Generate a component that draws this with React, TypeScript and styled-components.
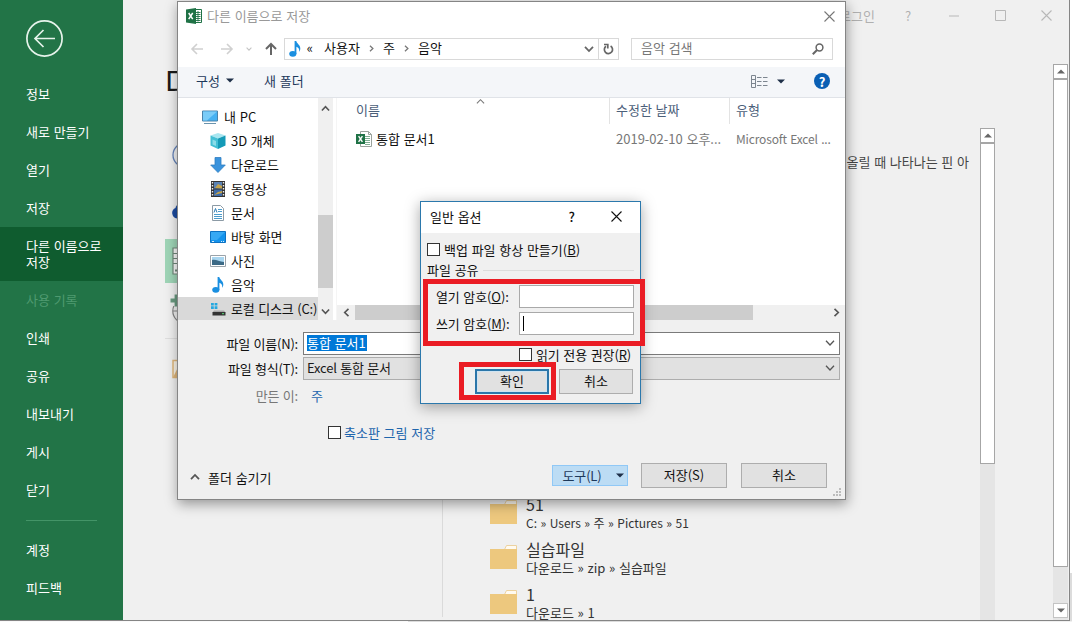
import React from 'react';
import styled, { createGlobalStyle, css } from 'styled-components';

const GlobalStyle = createGlobalStyle`
  * {
    box-sizing: border-box;
  }
  body {
    margin: 0;
    background: #f0f0f0;
    font-family: 'Noto Sans CJK KR', 'Noto Sans', sans-serif;
    font-size: 13px;
    word-spacing: 0.8px;
    color: #1a1a1a;
    overflow: hidden;
  }
  svg {
    display: block;
    flex: none;
  }
`;

const Screen = styled.div`
  position: relative;
  display: grid;
  grid-template-columns: 1070px 2px;
  grid-template-rows: 621px 1px;
  width: 1072px;
  height: 622px;
  overflow: hidden;
  white-space: nowrap;
`;

/* ---------- backstage window ---------- */

const Backstage = styled.div`
  display: flex;
  background: #f0f0f0;
  border-right: 1px solid #858585;
  border-bottom: 1px solid #858585;
  overflow: hidden;
`;

const Sidebar = styled.nav`
  width: 123px;
  flex: none;
  background: #227447;
  color: #fff;
`;

const BackButton = styled.div`
  height: 75px;
  padding: 20px 0 0 26px;
`;

const MenuItem = styled.div<{ $active?: boolean; $disabled?: boolean }>`
  display: flex;
  align-items: center;
  height: ${({ $active }) => ($active ? 54 : 38)}px;
  padding-left: 26px;
  line-height: 16px;
  white-space: pre-line;
  color: ${({ $disabled }) => ($disabled ? '#4f9a70' : '#fff')};
  ${({ $active }) => $active && css`
    background: #0f5c2f;
  `}
`;

const MenuDivider = styled.div`
  height: 1px;
  width: 71px;
  margin: 11px 0 10px 26px;
  background: #439467;
`;

const Main = styled.div`
  flex: 1;
  display: flex;
  flex-direction: column;
`;

const WindowBar = styled.div`
  display: flex;
  flex: none;
  justify-content: flex-end;
  align-items: center;
  height: 31px;
  color: #b0b0b0;
`;

const SignIn = styled.span`
  padding-right: 10px;
`;

const WindowButton = styled.span`
  display: flex;
  justify-content: center;
  width: 46px;
`;

const MainBody = styled.div`
  flex: 1;
  display: flex;
  min-height: 0;
`;

const Places = styled.div`
  width: 320px;
  height: 586px;
  padding: 33px 0 0 42px;
  border-right: 1px solid #dadada;
`;

const Heading = styled.h1`
  height: 37px;
  margin: 0 0 32px;
  font-size: 32px;
  font-weight: 400;
  line-height: 35px;
`;

const Place = styled.div<{ $gap: number; $active?: boolean }>`
  display: flex;
  align-items: center;
  height: 44px;
  padding-left: 7px;
  margin-bottom: ${({ $gap }) => $gap}px;
  background: ${({ $active }) => ($active ? '#9fd5b7' : 'transparent')};
`;

const PlaceDivider = styled.div`
  height: 1px;
  margin-bottom: 8px;
  background: #dedede;
`;

const Recent = styled.div`
  flex: 1;
  display: flex;
  flex-direction: column;
  padding-top: 121px;
`;

const PinHint = styled.div`
  flex: none;
  height: 342px;
  padding-right: 11px;
  text-align: right;
  line-height: 20px;
  color: #444;
`;

const FolderRow = styled.div`
  display: flex;
  flex: none;
  height: 45px;
  padding: 0 0 0 47px;
  gap: 9px;
`;

const FolderName = styled.div`
  font-size: 16px;
  line-height: 18px;
  padding: 1px 0 3px;
  color: #333;
`;

const FolderPath = styled.div<{ $latin?: boolean }>`
  font-size: ${({ $latin }) => ($latin ? 12 : 13)}px;
  line-height: 13px;
  color: #333;
`;

const Track = styled.div<{ $top: number; $right: number }>`
  display: flex;
  flex-direction: column;
  width: 15px;
  margin: ${({ $top, $right }) => `${$top}px ${$right}px 0 0`};
  background: #e5e5e5;
`;

const TrackButton = styled.div<{ $end?: boolean }>`
  display: flex;
  align-items: center;
  justify-content: center;
  height: 15px;
  background: #fff;
  border: 1px solid #a6a6a6;
  ${({ $end }) => $end && css`
    margin: auto 0 2px;
    border-color: #c4c4c4;
  `}
`;

const TrackThumb = styled.div<{ $size: number }>`
  height: ${({ $size }) => $size}px;
  background: #fff;
  border: 1px solid #a6a6a6;
`;

const EdgeStrip = styled.div`
  background: linear-gradient(#fff 0 573px, #dcdcdc 573px);
`;

const BottomStrip = styled.div`
  grid-column: 1 / 3;
  background: linear-gradient(90deg, #fafafa 0 408px, #dcdcdc 408px 700px, #f0f0f0 700px);
`;

/* ---------- save dialog ---------- */

const SaveDialog = styled.div`
  position: absolute;
  left: 177px;
  top: 1px;
  width: 669px;
  height: 499px;
  display: flex;
  flex-direction: column;
  background: #f0f0f0;
  border: 1px solid #858585;
  box-shadow: 1px 4px 12px rgba(0, 0, 0, 0.38);
`;

const TitleBar = styled.div`
  display: flex;
  align-items: center;
  height: 30px;
  padding: 0 10px 2px 8px;
  gap: 5px;
  background: #fff;
  color: #999;
`;

const Title = styled.span`
  flex: 1;
  padding-bottom: 2px;
`;

const NavBar = styled.div`
  display: flex;
  align-items: center;
  height: 35px;
  padding: 0 12px 2px 12px;
  background: #fff;
`;

const NavArrows = styled.div`
  display: flex;
  align-items: center;
  width: 94px;
`;

const NavGap = styled.span<{ $width: number }>`
  width: ${({ $width }) => $width}px;
`;

const AddressBar = styled.div`
  display: flex;
  align-items: center;
  width: 335px;
  height: 22px;
  border: 1px solid #d9d9d9;
  padding-left: 2px;
`;

const Crumb = styled.span<{ $width: number }>`
  width: ${({ $width }) => $width}px;
  padding-bottom: 2px;
  line-height: 18px;
  color: #111;
`;

const AddressEnd = styled.div`
  display: flex;
  align-items: center;
  margin-left: auto;
  height: 20px;
`;

const Refresh = styled.div`
  display: flex;
  align-items: center;
  justify-content: center;
  width: 20px;
  height: 20px;
  margin-left: 4px;
  border-left: 1px solid #d9d9d9;
`;

const SearchBox = styled.div`
  display: flex;
  align-items: center;
  justify-content: space-between;
  width: 202px;
  height: 22px;
  margin-left: 12px;
  padding: 0 8px 0 9px;
  border: 1px solid #d9d9d9;
  line-height: 18px;
  color: #777;
`;

const SearchText = styled.span`
  padding-bottom: 2px;
`;

const Toolbar = styled.div`
  display: flex;
  align-items: center;
  height: 31px;
  padding: 0 15px 2px 18px;
  background: #f4f6f9;
  border-bottom: 1px solid #e0e3e8;
  color: #1e395b;
`;

const ToolbarItem = styled.span<{ $width: number }>`
  display: flex;
  align-items: center;
  gap: 6px;
  width: ${({ $width }) => $width}px;
  padding-bottom: 1px;
`;

const ToolbarEnd = styled.div`
  display: flex;
  align-items: center;
  margin-left: auto;
  gap: 9px;
`;

const HelpBadge = styled.span`
  display: flex;
  align-items: center;
  justify-content: center;
  width: 16px;
  height: 16px;
  margin-left: 20px;
  border-radius: 50%;
  background: #0a5fb4;
  color: #fff;
  font-size: 13px;
  font-weight: 700;
`;

const Browser = styled.div`
  display: flex;
  height: 222px;
  background: #fff;
`;

const Tree = styled.div`
  width: 140px;
  padding-top: 7px;
  overflow: hidden;
`;

const TreeItem = styled.div<{ $root?: boolean; $selected?: boolean }>`
  display: flex;
  align-items: center;
  gap: ${({ $root }) => ($root ? 6 : 5)}px;
  height: 24px;
  padding-left: ${({ $root }) => ($root ? 24 : 32)}px;
  background: ${({ $selected }) => ($selected ? '#d9d9d9' : 'transparent')};
  letter-spacing: ${({ $selected }) => ($selected ? '-0.15px' : 'normal')};
  color: #111;
`;

const TreeLabel = styled.span`
  padding-bottom: 2px;
`;

const TreeScroll = styled.div`
  display: flex;
  flex-direction: column;
  align-items: center;
  justify-content: space-between;
  width: 15px;
  padding: 6px 0 4px;
  background: #f0f0f0;
`;

const TreeThumb = styled.div`
  width: 15px;
  height: 73px;
  margin-top: 83px;
  background: #cdcdcd;
`;

const FileArea = styled.div`
  flex: 1;
  display: flex;
  flex-direction: column;
  margin-left: 3px;
  border-left: 1px solid #f5f5f5;
`;

const Columns = styled.div<{ $header?: boolean }>`
  display: grid;
  grid-template-columns: 272px 120px 1fr;
  height: ${({ $header }) => ($header ? 26 : 30)}px;
  line-height: ${({ $header }) => ($header ? 22 : 29)}px;
  color: ${({ $header }) => ($header ? '#4c607a' : '#777')};
`;

const Cell = styled.div<{ $line?: boolean; $first?: boolean; $latin?: boolean }>`
  display: flex;
  align-items: center;
  gap: 4px;
  padding-left: ${({ $first }) => ($first ? 18 : 6)}px;
  padding-bottom: 2px;
  border-left: 1px solid ${({ $line }) => ($line ? '#e3e3e3' : 'transparent')};
  ${({ $latin }) => $latin && css`
    font-size: 12px;
    letter-spacing: -0.15px;
  `}
`;

const SortMark = styled.span`
  align-self: flex-start;
  margin-left: 92px;
  margin-top: -1px;
`;

const FileName = styled.span`
  color: #111;
`;

const ListScroll = styled.div`
  display: flex;
  align-items: center;
  justify-content: space-between;
  height: 15px;
  margin-top: auto;
  padding: 0 4px 0 5px;
  background: #f0f0f0;
`;

const ListThumb = styled.div`
  width: 398px;
  height: 15px;
  margin: 0 auto 0 4px;
  background: #cdcdcd;
`;

const Form = styled.div`
  display: flex;
  flex-direction: column;
  gap: 3px;
  padding: 12px 5px 0 0;
`;

const Field = styled.div<{ $drop?: boolean }>`
  display: flex;
  align-items: center;
  height: 22px;
  margin-top: ${({ $drop }) => ($drop ? 2 : 0)}px;
`;

const FieldLabel = styled.span<{ $muted?: boolean }>`
  width: 120px;
  margin-right: 5px;
  text-align: right;
  letter-spacing: -0.2px;
  color: ${({ $muted }) => ($muted ? '#777' : '#111')};
`;

const Combo = styled.div<{ $grey?: boolean }>`
  display: flex;
  align-items: center;
  justify-content: space-between;
  flex: 1;
  height: 23px;
  padding: 0 4px 0 3px;
  line-height: 16px;
  letter-spacing: -0.2px;
  background: ${({ $grey }) => ($grey ? '#e1e1e1' : '#fff')};
  border: 1px solid ${({ $grey }) => ($grey ? '#adadad' : '#7a7a7a')};
`;

const Selection = styled.span`
  padding-right: 1px;
  letter-spacing: 0;
  background: #0078d7;
  color: #fff;
`;

const Author = styled.span`
  margin-left: 8px;
  color: #1f66ad;
`;

const CheckRow = styled.div<{ $link?: boolean }>`
  display: flex;
  align-items: center;
  gap: 4px;
  color: ${({ $link }) => ($link ? '#1f66ad' : '#111')};
`;

const ThumbnailRow = styled(CheckRow)`
  margin: 16px 0 0 150px;
  height: 20px;
  gap: 3px;
`;

const CheckBox = styled.span`
  width: 13px;
  height: 13px;
  background: #fff;
  border: 1px solid #333;
`;

const Footer = styled.div`
  display: flex;
  align-items: center;
  justify-content: flex-end;
  height: 26px;
  margin: 20px 18px 0 12px;
`;

const HideFolders = styled.div`
  display: flex;
  align-items: center;
  gap: 8px;
  margin-right: auto;
  padding-top: 4px;
  color: #111;
`;

const Button = styled.div<{ $width: number }>`
  display: flex;
  align-items: center;
  justify-content: center;
  width: ${({ $width }) => $width}px;
  height: 25px;
  padding-bottom: 2px;
  background: #e1e1e1;
  border: 1px solid #adadad;
  color: #111;
`;

const SaveButton = styled(Button)`
  margin: 0 14px 0 13px;
`;

const ToolsButton = styled(Button)`
  height: 21px;
  gap: 15px;
  padding-left: 7px;
  padding-bottom: 0;
  letter-spacing: -0.2px;
  background: #bcdcf4;
  border-color: #90c8f6;
  color: #1e395b;
`;

const Grip = styled.div`
  align-self: flex-end;
  margin: 0 3px 0 0;
`;

/* ---------- general options dialog ---------- */

const OptionsDialog = styled.div`
  position: absolute;
  left: 420px;
  top: 201px;
  width: 221px;
  height: 203px;
  background: #f0f0f0;
  border: 1px solid #2b78ac;
  box-shadow: 0 3px 14px rgba(0, 0, 0, 0.35);
`;

const OptionsTitle = styled.div`
  display: flex;
  align-items: center;
  height: 31px;
  padding: 0 18px 3px 9px;
  background: #fff;
  color: #111;
`;

const OptionsHelp = styled.span`
  margin: 0 36px 0 auto;
  font-weight: 500;
`;

const OptionsBody = styled.div`
  display: flex;
  flex-direction: column;
  padding: 7px 6px 0;
`;

const GroupLabel = styled.div`
  display: flex;
  align-items: center;
  gap: 4px;
  height: 20px;
  margin: 1px 0 3px;
  line-height: 20px;
  color: #111;

  &::after {
    content: '';
    flex: 1;
    height: 1px;
    background: #dcdcdc;
  }
`;

const PasswordRow = styled.div`
  display: flex;
  align-items: center;
  justify-content: space-between;
  height: 27px;
  padding-left: 9px;
  letter-spacing: -0.1px;
  color: #111;
`;

const PasswordInput = styled.div`
  display: flex;
  align-items: center;
  width: 115px;
  height: 23px;
  padding-left: 3px;
  background: #fff;
  border: 1px solid #a9a9a9;
`;

const Caret = styled.span`
  width: 1px;
  height: 15px;
  background: #000;
`;

const ReadOnlyRow = styled(CheckRow)`
  height: 18px;
  margin: 8px 0 6px 92px;
  letter-spacing: -0.1px;
`;

const OptionsButtons = styled.div`
  display: flex;
  justify-content: flex-end;
  gap: 10px;
  padding-right: 1px;
`;

const OkButton = styled(Button)`
  border: 2px solid #2b76a9;
  box-shadow: inset 0 0 0 1px #cfe4f2;
`;

const Highlight = styled.div<{ $x: number; $y: number; $w: number; $h: number }>`
  position: absolute;
  left: ${({ $x }) => $x}px;
  top: ${({ $y }) => $y}px;
  width: ${({ $w }) => $w}px;
  height: ${({ $h }) => $h}px;
  border: 5px solid #ea1c24;
`;

/* ---------- icons ---------- */

type ChevronProps = { dir: 'up' | 'down' | 'left' | 'right'; size?: number; color?: string; weight?: number };

const turns = { up: 0, right: 90, down: 180, left: 270 };

const Chevron = ({ dir, size = 9, color = '#555', weight = 1.8 }: ChevronProps) => (
  <svg width={size} height={size} viewBox="0 0 10 10" fill="none" stroke={color} strokeWidth={weight}>
    <path d="M1 7.2 5 3l4 4.2" transform={`rotate(${turns[dir]} 5 5)`} />
  </svg>
);

const Triangle = ({ up, color = '#1e2f48' }: { up?: boolean; color?: string }) => (
  <svg width="8" height="5" viewBox="0 0 8 5" fill={color}>
    <path d={up ? 'M0 4.5h8L4 .5z' : 'M0 .5h8l-4 4z'} />
  </svg>
);

const Arrow = ({ dir, color }: { dir: 'left' | 'right' | 'up'; color: string }) => (
  <svg width="14" height="14" viewBox="0 0 14 14" fill="none" stroke={color} strokeWidth={dir === 'up' ? 2 : 1.6}>
    <path d="M7 13V2M2 7l5-5 5 5" transform={`rotate(${turns[dir]} 7 7)`} />
  </svg>
);

const Cross = ({ size = 11, color }: { size?: number; color: string }) => (
  <svg width={size} height={size} viewBox="0 0 11 11" stroke={color} strokeWidth="1.1">
    <path d="M.5.5l10 10M10.5.5l-10 10" />
  </svg>
);

const ExcelIcon = () => (
  <svg width="16" height="16" viewBox="0 0 16 16">
    <path d="M7 1.5h8.5v13H7z" fill="#fff" stroke="#1f7246" />
    <path d="M9.5 4.5h5M9.5 6.5h5M9.5 8.5h5M9.5 10.5h5M9.5 12.5h5M12 3v10.5" stroke="#1f7246" strokeWidth=".9" />
    <path d="M0 1.5 10 0v16L0 14.5z" fill="#1f7246" />
    <path d="M2.7 5l4 6.2M6.7 5l-4 6.2" stroke="#fff" strokeWidth="1.5" />
  </svg>
);

const WorkbookIcon = () => (
  <svg width="16" height="16" viewBox="0 0 16 16">
    <path d="M4.5.5h8l3 3v12h-11z" fill="#fff" stroke="#9aa39d" />
    <path d="M12.5.5v3h3" fill="none" stroke="#9aa39d" />
    <path d="M9 5.5h5M9 7.5h5M9 9.5h5M9 11.5h5M9 13.5h5" stroke="#7fae92" />
    <path d="M0 3h9v10H0z" fill="#1f7246" />
    <path d="M2.6 5.2l3.800 5.600M6.400 5.200l-3.800 5.600" stroke="#fff" strokeWidth="1.4" />
  </svg>
);

const NoteIcon = () => (
  <svg width="16" height="16" viewBox="0 0 16 16" fill="#1a8fe0">
    <ellipse cx="5.8" cy="12.8" rx="3.6" ry="2.9" />
    <path d="M7.600 0h1.700c.3 2.600 4.300 3.900 4 7.700-.1 1.300-.6 2.200-1.200 3 .5-2.900-.6-4.200-2.700-5v7.300H7.600z" />
  </svg>
);

const PcIcon = () => (
  <svg width="16" height="16" viewBox="0 0 16 16">
    <path d="M.5 2h15v10H.5z" fill="#46b1f2" stroke="#4b83ab" />
    <path d="M1 2.500h14L5 11.500H1z" fill="#7accf8" />
    <path d="M2 14.500h12" stroke="#6a93ad" />
  </svg>
);

const CubeIcon = () => (
  <svg width="16" height="16" viewBox="0 0 16 16">
    <path d="M8 0l7.500 2.500L8 5.500.5 2.500z" fill="#a8e6f0" />
    <path d="M.5 2.500 8 5.500V16L.5 12.500z" fill="#43bfd4" />
    <path d="M15.500 2.500 8 5.500V16l7.500-3.500z" fill="#149ab7" />
    <path d="M2.500 6.500 6 8v5l-3.500-1.500z" fill="#8adce8" />
  </svg>
);

const DownloadIcon = () => (
  <svg width="16" height="16" viewBox="0 0 16 16">
    <path d="M5 .5h6V8h4.300L8 15.500.7 8H5z" fill="#3a93dd" stroke="#2f7dc2" strokeWidth=".8" />
  </svg>
);

const VideoIcon = () => (
  <svg width="16" height="16" viewBox="0 0 16 16">
    <path d="M1 0h14v16H1z" fill="#333" />
    <path d="M4 1h8v6.500H4z" fill="#5a82b4" />
    <path d="M4 8.500h8V15H4z" fill="#3e6cab" />
    <path d="M5 7l3-4 4 2v2.500zM4 14l4-3 4-1v2z" fill="#c5a34a" />
    <path d="M2.500 1v15M13.500 1v15" stroke="#eee" strokeWidth="1.4" strokeDasharray="1.5 1.5" />
  </svg>
);

const DocIcon = () => (
  <svg width="16" height="16" viewBox="0 0 16 16" fill="none">
    <path d="M2.500.5h8l3 3v12h-11z" fill="#fff" stroke="#8c9aa5" />
    <path d="M8 4.500h4M8 6.500h4M4 9.500h8M4 11.500h8M4 13.500h8" stroke="#4c9ccc" />
    <path d="M4 7.500 5.500 3.500 7 7.500" stroke="#2f7db5" />
  </svg>
);

const DesktopIcon = () => (
  <svg width="16" height="16" viewBox="0 0 16 16">
    <path d="M.5 2.500h15v11H.5z" fill="#1493ec" stroke="#0d72c2" />
    <path d="M1 3h14L7 11H1z" fill="#36a9f4" />
    <path d="M2 12.500h12" stroke="#d7eefc" strokeDasharray="2 7 1 1" />
  </svg>
);

const PictureIcon = () => (
  <svg width="16" height="16" viewBox="0 0 16 16">
    <path d="M.5 2.500h15v11H.5z" fill="#fff" stroke="#9aa3aa" />
    <path d="M2 4h12v8H2z" fill="#a9d6f0" />
    <path d="M2 7c4-1 7 2 12 2v3H2z" fill="#3c6a86" />
  </svg>
);

const DiskIcon = () => (
  <svg width="16" height="16" viewBox="0 0 16 16">
    <path d="M1 2h2.800v2.600H1zM4.600 2h2.800v2.600H4.600zM1 5.300h2.800v2.600H1zM4.600 5.300h2.800v2.600H4.600z" fill="#25a8e0" />
    <path d="M4 9.500h10l1.500 2H2.500z" fill="#a7a7a7" />
    <path d="M2.500 11h13v3.500h-13z" fill="#333" />
    <path d="M12 12.700h2" stroke="#5be07a" />
  </svg>
);

const RefreshIcon = () => (
  <svg width="11" height="12" viewBox="0 0 11 12" fill="none" stroke="#666" strokeWidth="1.7">
    <path d="M7.600 3A4.100 4.100 0 1 1 3 3.200" />
    <path d="M1 1.500h3.800v4" />
  </svg>
);

const SearchIcon = () => (
  <svg width="12" height="12" viewBox="0 0 12 12" fill="none" stroke="#666">
    <circle cx="7.5" cy="4.5" r="3.4" strokeWidth="1.5" />
    <path d="M5 7 .8 11.200" strokeWidth="2" />
  </svg>
);

const ViewIcon = () => (
  <svg width="17" height="13" viewBox="0 0 17 13" fill="none" stroke="#7c858f">
    <path d="M.5.5h4v12h-4zM.5 4.500h4M.5 8.500h4" />
    <path d="M6 2.500h4.500M12 2.500h4.500M6 6.500h4.500M12 6.500h4.500M6 10.500h4.500M12 10.500h4.500" />
  </svg>
);

const FolderIcon = () => (
  <svg width="27" height="31" viewBox="0 0 27 31">
    <path d="M14 11.500 16.500 6.500h10v5" fill="#fffaf0" stroke="#ecd2a0" />
    <path d="M0 10h27v20H0z" fill="#edc87e" />
  </svg>
);

const ClockIcon = () => (
  <svg width="26" height="26" viewBox="0 0 26 26" fill="none" stroke="#6382b8" strokeWidth="1.3">
    <circle cx="13" cy="13" r="12" />
    <path d="M13 5v9h7" />
  </svg>
);

const CloudIcon = () => (
  <svg width="32" height="20" viewBox="0 0 32 20" fill="#1c4ba0">
    <path d="M5 17.500a5.500 5.500 0 0 1-1.500-10.500C4 2 13-.5 17 4c5-1 8 1 8 5 5 0 6 8.500 0 8.500z" />
  </svg>
);

const ServerIcon = () => (
  <svg width="26" height="30" viewBox="0 0 26 30" fill="#f6f6f6" stroke="#70897b" strokeWidth="1.2">
    <path d="M1 2h14v26H1z" />
    <path d="M1 7.500h11M1 12.500h11M1 17.500h11" />
    <path d="M3 24.500h2" strokeWidth="2" />
  </svg>
);

const AddPlaceIcon = () => (
  <svg width="26" height="34" viewBox="0 0 26 34" fill="none" overflow="visible">
    <circle cx="13" cy="20" r="12.2" stroke="#858585" strokeWidth="1.2" />
    <path d="M1 20h24M13 8v24" stroke="#858585" />
    <path d="M-2 1h14v14H-2z" fill="#f0f0f0" />
    <path d="M-1.500 9.500h12M4.500 3.500v12" stroke="#6a9a80" strokeWidth="3.8" />
  </svg>
);

const BrowseIcon = () => (
  <svg width="26" height="20" viewBox="0 0 26 20">
    <path d="M1 1.500h24v17H1z" fill="#faf4e8" stroke="#dfb67b" strokeWidth="1.5" />
    <path d="M1 18.500 7 6h18v12.500z" fill="#dfb67b" />
  </svg>
);

const GripIcon = () => (
  <svg width="9" height="9" viewBox="0 0 9 9" fill="#bcbcbc">
    <path d="M6 0h2v2H6zM3 3h2v2H3zM6 3h2v2H6zM0 6h2v2H0zM3 6h2v2H3zM6 6h2v2H6z" />
  </svg>
);

/* ---------- data ---------- */

const menu = [
  { label: '정보' },
  { label: '새로 만들기' },
  { label: '열기' },
  { label: '저장' },
  { label: '다른 이름으로\n저장', active: true },
  { label: '사용 기록', disabled: true },
  { label: '인쇄' },
  { label: '공유' },
  { label: '내보내기' },
  { label: '게시' },
  { label: '닫기' },
];

const folders = [
  { name: '51', path: 'C: » Users » 주 » Pictures » 51', latin: true },
  { name: '실습파일', path: '다운로드 » zip » 실습파일' },
  { name: '1', path: '다운로드 » 1' },
];

const tree = [
  { label: '내 PC', icon: <PcIcon />, root: true },
  { label: '3D 개체', icon: <CubeIcon /> },
  { label: '다운로드', icon: <DownloadIcon /> },
  { label: '동영상', icon: <VideoIcon /> },
  { label: '문서', icon: <DocIcon /> },
  { label: '바탕 화면', icon: <DesktopIcon /> },
  { label: '사진', icon: <PictureIcon /> },
  { label: '음악', icon: <NoteIcon /> },
  { label: '로컬 디스크 (C:)', icon: <DiskIcon />, selected: true },
];

const App = () => {
  return (
    <>
      <GlobalStyle />
      <Screen>
        <Backstage>
          <Sidebar>
            <BackButton>
              <svg width="37" height="37" viewBox="0 0 37 37" fill="none" stroke="#e6f3eb" strokeWidth="1.7">
                <circle cx="18.5" cy="18.5" r="17.6" />
                <path d="M29 18.500H9.500M17.500 10l-8.500 8.500 8.500 8.500" />
              </svg>
            </BackButton>
            {menu.map((item) => (
              <MenuItem key={item.label} $active={item.active} $disabled={item.disabled}>
                {item.label}
              </MenuItem>
            ))}
            <MenuDivider />
            <MenuItem>계정</MenuItem>
            <MenuItem>피드백</MenuItem>
          </Sidebar>
          <Main>
            <WindowBar>
              <SignIn>로그인</SignIn>
              <WindowButton>?</WindowButton>
              <WindowButton>
                <svg width="10" height="2"><path d="M0 1h10" stroke="#b8b8b8" /></svg>
              </WindowButton>
              <WindowButton>
                <svg width="11" height="11"><path d="M.5.5h10v10H.5z" fill="none" stroke="#b8b8b8" /></svg>
              </WindowButton>
              <WindowButton><Cross color="#b8b8b8" /></WindowButton>
            </WindowBar>
            <MainBody>
              <Places>
                <Heading>다</Heading>
                <Place $gap={12}><ClockIcon /></Place>
                <Place $gap={6}><CloudIcon /></Place>
                <Place $gap={3} $active><ServerIcon /></Place>
                <Place $gap={8}><AddPlaceIcon /></Place>
                <PlaceDivider />
                <Place $gap={0}><BrowseIcon /></Place>
              </Places>
              <Recent>
                <PinHint>올릴 때 나타나는 핀 아</PinHint>
                {folders.map((folder) => (
                  <FolderRow key={folder.name}>
                    <FolderIcon />
                    <div>
                      <FolderName>{folder.name}</FolderName>
                      <FolderPath $latin={folder.latin}>{folder.path}</FolderPath>
                    </div>
                  </FolderRow>
                ))}
              </Recent>
              <Track $top={97} $right={58}>
                <TrackButton><Triangle up color="#666" /></TrackButton>
                <TrackThumb $size={321} />
              </Track>
              <Track $top={33} $right={1}>
                <TrackButton><Triangle up color="#666" /></TrackButton>
                <TrackThumb $size={488} />
                <TrackButton $end><Triangle color="#666" /></TrackButton>
              </Track>
            </MainBody>
          </Main>
        </Backstage>
        <EdgeStrip />
        <BottomStrip />

        <SaveDialog>
          <TitleBar>
            <ExcelIcon />
            <Title>다른 이름으로 저장</Title>
            <Cross color="#777" />
          </TitleBar>
          <NavBar>
            <NavArrows>
              <Arrow dir="left" color="#d0d0d0" />
              <NavGap $width={16} />
              <Arrow dir="right" color="#d0d0d0" />
              <NavGap $width={12} />
              <Chevron dir="down" size={6} color="#c4c4c4" />
              <NavGap $width={12} />
              <Arrow dir="up" color="#666" />
            </NavArrows>
            <AddressBar>
              <NoteIcon />
              <Crumb $width={21}>&nbsp;«</Crumb>
              <Crumb $width={44}>사용자</Crumb>
              <Chevron dir="right" size={7} color="#777" />
              <Crumb $width={8} />
              <Crumb $width={20}>주</Crumb>
              <Chevron dir="right" size={7} color="#777" />
              <Crumb $width={8} />
              <Crumb $width={30}>음악</Crumb>
              <AddressEnd>
                <Chevron dir="down" size={10} color="#666" />
                <Refresh><RefreshIcon /></Refresh>
              </AddressEnd>
            </AddressBar>
            <SearchBox>
              <SearchText>음악 검색</SearchText>
              <SearchIcon />
            </SearchBox>
          </NavBar>
          <Toolbar>
            <ToolbarItem $width={68}>구성 <Triangle /></ToolbarItem>
            <ToolbarItem $width={60}>새 폴더</ToolbarItem>
            <ToolbarEnd>
              <ViewIcon />
              <Triangle />
              <HelpBadge>?</HelpBadge>
            </ToolbarEnd>
          </Toolbar>
          <Browser>
            <Tree>
              {tree.map((item) => (
                <TreeItem key={item.label} $root={item.root} $selected={item.selected}>
                  {item.icon}
                  <TreeLabel>{item.label}</TreeLabel>
                </TreeItem>
              ))}
            </Tree>
            <TreeScroll>
              <Chevron dir="up" />
              <TreeThumb />
              <Chevron dir="down" />
            </TreeScroll>
            <FileArea>
              <Columns $header>
                <Cell $first>
                  이름
                  <SortMark><Chevron dir="up" size={9} color="#777" weight={1.2} /></SortMark>
                </Cell>
                <Cell $line>수정한 날짜</Cell>
                <Cell $line>유형</Cell>
              </Columns>
              <Columns>
                <Cell $first>
                  <WorkbookIcon />
                  <FileName>통합 문서1</FileName>
                </Cell>
                <Cell>2019-02-10 오후...</Cell>
                <Cell $latin>Microsoft Excel ...</Cell>
              </Columns>
              <ListScroll>
                <Chevron dir="left" />
                <ListThumb />
                <Chevron dir="right" />
              </ListScroll>
            </FileArea>
          </Browser>
          <Form>
            <Field>
              <FieldLabel>파일 이름(N):</FieldLabel>
              <Combo>
                <Selection>통합 문서1</Selection>
                <Chevron dir="down" size={10} weight={1.3} />
              </Combo>
            </Field>
            <Field>
              <FieldLabel>파일 형식(T):</FieldLabel>
              <Combo $grey>
                Excel 통합 문서
                <Chevron dir="down" size={10} weight={1.3} />
              </Combo>
            </Field>
            <Field $drop>
              <FieldLabel $muted>만든 이:</FieldLabel>
              <Author>주</Author>
            </Field>
          </Form>
          <ThumbnailRow $link>
            <CheckBox />
            축소판 그림 저장
          </ThumbnailRow>
          <Footer>
            <HideFolders>
              <Chevron dir="up" size={10} />
              폴더 숨기기
            </HideFolders>
            <ToolsButton $width={76}>도구(L) <Triangle /></ToolsButton>
            <SaveButton $width={86}>저장(S)</SaveButton>
            <Button $width={86}>취소</Button>
          </Footer>
          <Grip><GripIcon /></Grip>
        </SaveDialog>

        <OptionsDialog>
          <OptionsTitle>
            일반 옵션
            <OptionsHelp>?</OptionsHelp>
            <Cross color="#111" />
          </OptionsTitle>
          <OptionsBody>
            <CheckRow>
              <CheckBox />
              <span>백업 파일 항상 만들기(<u>B</u>)</span>
            </CheckRow>
            <GroupLabel>파일 공유</GroupLabel>
            <PasswordRow>
              <span>열기 암호(<u>O</u>):</span>
              <PasswordInput />
            </PasswordRow>
            <PasswordRow>
              <span>쓰기 암호(<u>M</u>):</span>
              <PasswordInput><Caret /></PasswordInput>
            </PasswordRow>
            <ReadOnlyRow>
              <CheckBox />
              <span>읽기 전용 권장(<u>R</u>)</span>
            </ReadOnlyRow>
            <OptionsButtons>
              <OkButton $width={74}>확인</OkButton>
              <Button $width={74}>취소</Button>
            </OptionsButtons>
          </OptionsBody>
        </OptionsDialog>

        <Highlight $x={423} $y={279} $w={222} $h={67} />
        <Highlight $x={459} $y={362} $w={97} $h={38} />
      </Screen>
    </>
  );
};

export default App;
